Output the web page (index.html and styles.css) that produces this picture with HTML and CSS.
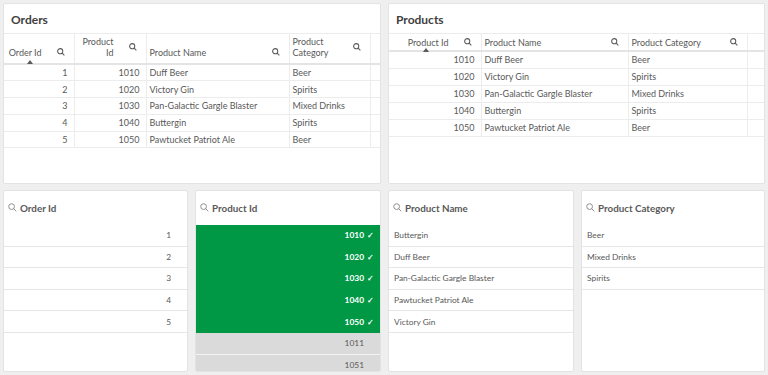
FILE: index.html
```html
<!DOCTYPE html>
<html>
<head>
<meta charset="utf-8">
<link rel="stylesheet" href="styles.css">
</head>
<body>
<div class="sheet">
  <div class="toprow">
    <section class="panel">
      <div class="ptitle">Orders</div>
      <table class="tbl orders">
        <colgroup><col class="oc1"><col class="oc2"><col class="oc3"><col class="oc4"><col></colgroup>
        <thead>
          <tr>
            <th class="num"><div class="hc"><span class="lbl sorted">Order Id</span><svg class="mag" viewBox="0 0 10 10"><circle cx="4" cy="4" r="3.2"/><path d="M6.4 6.4 9.2 9.2"/></svg></div></th>
            <th class="num"><div class="hc"><span class="lbl">Product<br>Id</span><svg class="mag" viewBox="0 0 10 10"><circle cx="4" cy="4" r="3.2"/><path d="M6.4 6.4 9.2 9.2"/></svg></div></th>
            <th><div class="hc"><span class="lbl">Product Name</span><svg class="mag" viewBox="0 0 10 10"><circle cx="4" cy="4" r="3.2"/><path d="M6.4 6.4 9.2 9.2"/></svg></div></th>
            <th><div class="hc"><span class="lbl">Product<br>Category</span><svg class="mag" viewBox="0 0 10 10"><circle cx="4" cy="4" r="3.2"/><path d="M6.4 6.4 9.2 9.2"/></svg></div></th>
            <th></th>
          </tr>
        </thead>
        <tbody>
          <tr><td class="num">1</td><td class="num">1010</td><td>Duff Beer</td><td>Beer</td><td></td></tr>
          <tr><td class="num">2</td><td class="num">1020</td><td>Victory Gin</td><td>Spirits</td><td></td></tr>
          <tr><td class="num">3</td><td class="num">1030</td><td>Pan-Galactic Gargle Blaster</td><td>Mixed Drinks</td><td></td></tr>
          <tr><td class="num">4</td><td class="num">1040</td><td>Buttergin</td><td>Spirits</td><td></td></tr>
          <tr><td class="num">5</td><td class="num">1050</td><td>Pawtucket Patriot Ale</td><td>Beer</td><td></td></tr>
        </tbody>
      </table>
    </section>
    <section class="panel">
      <div class="ptitle">Products</div>
      <table class="tbl products">
        <colgroup><col class="pc1"><col class="pc2"><col class="pc3"><col></colgroup>
        <thead>
          <tr>
            <th class="num"><div class="hc"><span class="lbl sorted">Product Id</span><svg class="mag" viewBox="0 0 10 10"><circle cx="4" cy="4" r="3.2"/><path d="M6.4 6.4 9.2 9.2"/></svg></div></th>
            <th><div class="hc"><span class="lbl">Product Name</span><svg class="mag" viewBox="0 0 10 10"><circle cx="4" cy="4" r="3.2"/><path d="M6.4 6.4 9.2 9.2"/></svg></div></th>
            <th><div class="hc"><span class="lbl">Product Category</span><svg class="mag" viewBox="0 0 10 10"><circle cx="4" cy="4" r="3.2"/><path d="M6.4 6.4 9.2 9.2"/></svg></div></th>
            <th></th>
          </tr>
        </thead>
        <tbody>
          <tr><td class="num">1010</td><td>Duff Beer</td><td>Beer</td><td></td></tr>
          <tr><td class="num">1020</td><td>Victory Gin</td><td>Spirits</td><td></td></tr>
          <tr><td class="num">1030</td><td>Pan-Galactic Gargle Blaster</td><td>Mixed Drinks</td><td></td></tr>
          <tr><td class="num">1040</td><td>Buttergin</td><td>Spirits</td><td></td></tr>
          <tr><td class="num">1050</td><td>Pawtucket Patriot Ale</td><td>Beer</td><td></td></tr>
        </tbody>
      </table>
    </section>
  </div>
  <div class="botrow">
    <section class="panel lb">
      <div class="lbhead"><svg class="lmag" viewBox="0 0 10 10"><circle cx="4" cy="4" r="3.2"/><path d="M6.4 6.4 9.2 9.2"/></svg><span>Order Id</span></div>
      <ul class="items right">
        <li><span class="v">1</span><span class="ck"></span></li>
        <li><span class="v">2</span><span class="ck"></span></li>
        <li><span class="v">3</span><span class="ck"></span></li>
        <li><span class="v">4</span><span class="ck"></span></li>
        <li><span class="v">5</span><span class="ck"></span></li>
      </ul>
    </section>
    <section class="panel lb">
      <div class="lbhead"><svg class="lmag" viewBox="0 0 10 10"><circle cx="4" cy="4" r="3.2"/><path d="M6.4 6.4 9.2 9.2"/></svg><span>Product Id</span></div>
      <ul class="items right">
        <li class="sel"><span class="v">1010</span><span class="ck">✓</span></li>
        <li class="sel"><span class="v">1020</span><span class="ck">✓</span></li>
        <li class="sel"><span class="v">1030</span><span class="ck">✓</span></li>
        <li class="sel"><span class="v">1040</span><span class="ck">✓</span></li>
        <li class="sel"><span class="v">1050</span><span class="ck">✓</span></li>
        <li class="alt"><span class="v">1011</span><span class="ck"></span></li>
        <li class="alt"><span class="v">1051</span><span class="ck"></span></li>
      </ul>
    </section>
    <section class="panel lb">
      <div class="lbhead"><svg class="lmag" viewBox="0 0 10 10"><circle cx="4" cy="4" r="3.2"/><path d="M6.4 6.4 9.2 9.2"/></svg><span>Product Name</span></div>
      <ul class="items">
        <li><span class="v">Buttergin</span></li>
        <li><span class="v">Duff Beer</span></li>
        <li><span class="v">Pan-Galactic Gargle Blaster</span></li>
        <li><span class="v">Pawtucket Patriot Ale</span></li>
        <li><span class="v">Victory Gin</span></li>
      </ul>
    </section>
    <section class="panel lb">
      <div class="lbhead"><svg class="lmag" viewBox="0 0 10 10"><circle cx="4" cy="4" r="3.2"/><path d="M6.4 6.4 9.2 9.2"/></svg><span>Product Category</span></div>
      <ul class="items">
        <li><span class="v">Beer</span></li>
        <li><span class="v">Mixed Drinks</span></li>
        <li><span class="v">Spirits</span></li>
      </ul>
    </section>
  </div>
</div>
</body>
</html>
```
FILE: styles.css
```css
* { box-sizing: border-box; }
html, body { margin: 0; padding: 0; }
body {
  width: 768px;
  height: 375px;
  overflow: hidden;
  background: #efefef;
  font-family: Lato, "Noto Sans", sans-serif;
  color: #595959;
}
.sheet {
  padding: 3px;
  height: 375px;
  display: grid;
  grid-template-rows: 181px 182px;
  row-gap: 6px;
}
.toprow {
  display: grid;
  grid-template-columns: 378px 377px;
  column-gap: 7px;
}
.botrow {
  display: grid;
  grid-template-columns: 185px 186px 186px 184px;
  column-gap: 7px;
}
.panel {
  background: #fff;
  border: 1px solid #e3e3e3;
  border-radius: 2px;
  overflow: hidden;
}
.ptitle {
  height: 30px;
  padding: 8px 0 0 7px;
  font-size: 12px;
  font-weight: 700;
  color: #404040;
  border-bottom: 1px solid #ececec;
}
.tbl {
  border-collapse: collapse;
  table-layout: fixed;
  width: 100%;
  font-size: 9px;
}
.oc1 { width: 70px; }
.oc2 { width: 72px; }
.oc3 { width: 143px; }
.oc4 { width: 81px; }
.pc1 { width: 92px; }
.pc2 { width: 147px; }
.pc3 { width: 119px; }
.tbl th {
  font-weight: 400;
  padding: 0 9px 0 3px;
  border-right: 1px solid #ececec;
  border-bottom: 2px solid #e4e4e4;
  text-align: left;
}
.tbl th.num { padding-left: 4px; }
.tbl th:last-child, .tbl td:last-child { border-right: none; }
.orders th { height: 30px; vertical-align: bottom; }
.products th { height: 17px; vertical-align: middle; }
.hc {
  display: flex;
  align-items: flex-end;
  gap: 4px;
}
.num .hc { gap: 15px; justify-content: flex-end; }
.orders .hc { padding-bottom: 5px; }
.products .hc { align-items: center; }
.lbl {
  flex: 1;
  line-height: 11px;
  position: relative;
}
.num .lbl { flex: none; text-align: right; white-space: nowrap; }
.sorted::after {
  content: "";
  position: absolute;
  left: 18px;
  bottom: -6px;
  border-left: 3px solid transparent;
  border-right: 3px solid transparent;
  border-bottom: 4px solid #595959;
}
.products .sorted::after { left: 15px; bottom: -4px; }
.mag {
  width: 8px;
  height: 8px;
  flex: none;
  fill: none;
  stroke: #595959;
  stroke-width: 1.3;
  align-self: center;
}
.orders .mag { margin-bottom: 1px; }
.tbl td {
  height: 16.8px;
  padding: 0 6px 0 3px;
  border-right: 1px solid #ececec;
  border-bottom: 1px solid #ececec;
  white-space: nowrap;
  line-height: 15px;
}
.products td { height: 17px; }
.tbl td.num { text-align: right; }
.lb { display: flex; flex-direction: column; }
.lbhead {
  height: 34px;
  flex: none;
  display: flex;
  align-items: center;
  gap: 3px;
  padding-left: 4px;
  padding-bottom: 1px;
  font-size: 9.8px;
  font-weight: 700;
  color: #595959;
}
.lmag {
  width: 9px;
  height: 9px;
  fill: none;
  stroke: #8c8c8c;
  stroke-width: 1.1;
}
.items {
  list-style: none;
  margin: 0;
  padding: 0;
  font-size: 8.4px;
}
.items li {
  height: 21.6px;
  display: flex;
  align-items: center;
  padding: 0 6px 0 5px;
  border-bottom: 1px solid #e6e6e6;
}
.items.right li { justify-content: flex-end; }
.ck {
  width: 10px;
  text-align: right;
  font-size: 8px;
}
.items li.sel {
  background: #009845;
  color: #fff;
  font-weight: 700;
  border-bottom-color: #009845;
}
.items li.alt {
  background: #dadada;
  border-bottom: 1px solid #f2f2f2;
}
```
